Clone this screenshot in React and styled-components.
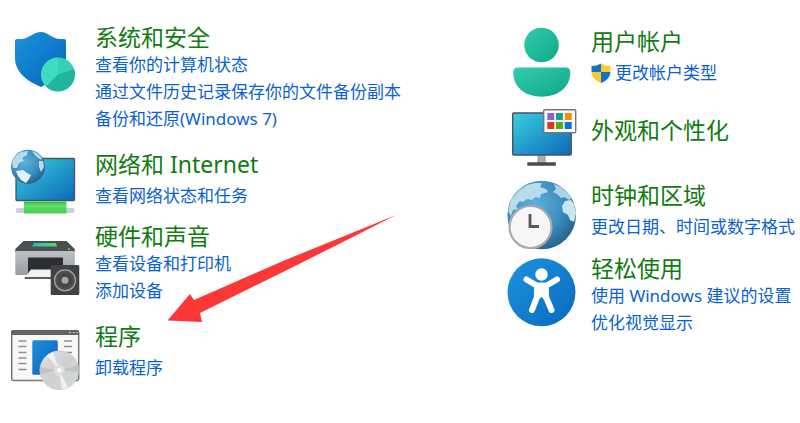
import React from 'react'
import styled, { createGlobalStyle, ThemeProvider } from 'styled-components'

const theme = {
  color: {
    background: '#ffffff',
    title: '#107c10',
    link: '#0b62cf',
    arrow: '#fb3737',
  },
  font: '"Noto Sans", "Noto Sans CJK SC", sans-serif',
}

const GlobalStyle = createGlobalStyle`
  body {
    margin: 0;
    background: ${theme.color.background};
    font-family: ${theme.font};
  }
`

const Panel = styled.main`
  position: relative;
  display: grid;
  grid-template-columns: 62% 1fr;
`

const Column = styled.div`
  padding: ${props => props.$top}px 0 24px 8px;
`

const Category = styled.section`
  display: flex;
  align-items: flex-start;
  gap: 15px;
  margin-bottom: ${props => props.$after || 0}px;
`

const Picture = styled.svg`
  flex: none;
  width: 72px;
  height: 72px;
  overflow: visible;
`

const Details = styled.div`
  padding-top: ${props => (props.$bare ? 9 : 0)}px;
  white-space: nowrap;
`

const Title = styled.h2`
  margin: 0;
  font-size: 23px;
  font-weight: 400;
  line-height: 28px;
`

const TitleLink = styled.a`
  color: ${props => props.theme.color.title};
  text-decoration: none;
`

const Tasks = styled.ul`
  list-style: none;
  margin: ${props => (props.$single ? 4 : 0)}px 0 0;
  padding: 0;
`

const Task = styled.li`
  font-size: 17px;
  line-height: 27px;
`

const TaskLink = styled.a`
  display: inline-flex;
  align-items: center;
  gap: 4px;
  color: ${props => props.theme.color.link};
  text-decoration: none;

  &:hover {
    text-decoration: underline;
  }
`

const Badge = styled.svg`
  width: 20px;
  height: 20px;
`

// lies over the left column and points at the programs category
const Pointer = styled.svg`
  position: absolute;
  left: 167px;
  top: 214px;
  width: 231px;
  height: 110px;
  pointer-events: none;
`

const ShieldIcon = () => (
  <Picture viewBox="0 -1 72 72" aria-hidden="true">
    <defs>
      <linearGradient id="shield" x1="0" y1="0" x2="1" y2="1">
        <stop offset="0" stopColor="#1b93dc" />
        <stop offset="1" stopColor="#0563bd" />
      </linearGradient>
    </defs>
    <path d="M33 8 C40 8 43 14 51 15 H56 Q58 15 58 17 V34 C58 48 46 57 33 63 C19 57 7 48 7 34 V17 Q7 15 9 15 H14 C22 14 25 8 33 8 Z" fill="url(#shield)" />
    <circle cx="50" cy="50.5" r="17" fill="#33d2b7" />
    <path d="M50 50.5 V33.5 A17 17 0 0 0 38 62.5 Z" fill="#3edcc0" />
    <path d="M50 50.5 L38 62.5 A17 17 0 0 0 66 45 Z" fill="#20b69e" />
  </Picture>
)

const NetworkIcon = () => (
  <Picture viewBox="0 -1 72 72" aria-hidden="true">
    <defs>
      <linearGradient id="screen" x1="0" y1="0" x2="1" y2="1">
        <stop offset="0" stopColor="#3ad0df" />
        <stop offset="1" stopColor="#0c68b8" />
      </linearGradient>
      <radialGradient id="globe" cx="0.4" cy="0.35" r="0.7">
        <stop offset="0" stopColor="#5fb2dc" />
        <stop offset="0.6" stopColor="#3a8dbd" />
        <stop offset="1" stopColor="#255f85" />
      </radialGradient>
      <linearGradient id="cable" x1="0" y1="0" x2="0" y2="1">
        <stop offset="0" stopColor="#35b84c" />
        <stop offset="0.35" stopColor="#5fe069" />
        <stop offset="1" stopColor="#45cc54" />
      </linearGradient>
    </defs>
    <rect x="8" y="7.5" width="58.5" height="42" rx="1" fill="url(#screen)" stroke="#46545d" strokeWidth="1.3" />
    <circle cx="20" cy="15.7" r="17" fill="url(#globe)" />
    <path d="M4 11 Q7 4 13 1 L20 0 L19 4 L14 7 L16 10 L11 12 L9 17 L5 17 Z" fill="#b9dcec" />
    <path d="M24 0 L29 2 L33 6 L34 9 L30 7 L27 4 Z M31 10 L35 10 L36 16 L33 21 L31 16 Z" fill="#b9dcec" />
    <path d="M8 20 L15 19 L19 22 L23 24 L21 28 L18 32 L13 29 L10 25 Z" fill="#e6f2f7" />
    <rect x="8" y="57" width="58.5" height="5" rx="1.5" fill="#cdd1d4" />
    <rect x="16" y="50.5" width="42.5" height="12" rx="1" fill="url(#cable)" />
  </Picture>
)

const PrinterIcon = () => (
  <Picture viewBox="0 -1 72 72" aria-hidden="true">
    <defs>
      <linearGradient id="body" x1="0" y1="0" x2="0" y2="1">
        <stop offset="0" stopColor="#bdc2c7" />
        <stop offset="1" stopColor="#979da3" />
      </linearGradient>
      <linearGradient id="light" x1="0" y1="0" x2="1" y2="0">
        <stop offset="0" stopColor="#24b9cf" />
        <stop offset="1" stopColor="#5bdc55" />
      </linearGradient>
    </defs>
    <path d="M15.5 18 H58.5 L66.7 26 V29 H7.3 V26 Z" fill="#4b4e52" />
    <path d="M26 20 H48 L49 23.5 H24 Z" fill="url(#light)" />
    <circle cx="61" cy="26" r="1" fill="#62d34f" />
    <rect x="7.3" y="28" width="59.5" height="24" rx="1.5" fill="url(#body)" />
    <rect x="20" y="34.5" width="35" height="17" rx="1" fill="#2c2e31" />
    <path d="M23 46.5 H53 V55 H16.5 Z" fill="#f0f1f2" />
    <path d="M16.5 54 H53 V56 H17 Z" fill="#5a5d61" />
    <rect x="42.7" y="42" width="28.6" height="30" rx="1.5" fill="#424242" />
    <circle cx="57" cy="57.3" r="10.5" fill="#505050" stroke="#a4a4a4" strokeWidth="1.2" />
    <circle cx="57" cy="57.3" r="7.5" fill="#464646" />
    <circle cx="57" cy="57.3" r="3.5" fill="#a6a6a6" />
  </Picture>
)

const ProgramsIcon = () => (
  <Picture viewBox="0 4 72 72" aria-hidden="true">
    <defs>
      <linearGradient id="app" x1="0" y1="0" x2="1" y2="1">
        <stop offset="0" stopColor="#1f8fdf" />
        <stop offset="1" stopColor="#0961b5" />
      </linearGradient>
      <linearGradient id="disc" x1="0" y1="0" x2="1" y2="1">
        <stop offset="0" stopColor="#e1e2e2" />
        <stop offset="0.5" stopColor="#cdcfd0" />
        <stop offset="1" stopColor="#d8dadb" />
      </linearGradient>
    </defs>
    <rect x="3.7" y="13" width="67" height="49.5" rx="2" fill="#f8f8f8" stroke="#77797b" strokeWidth="1.5" />
    <path d="M3 17 V14 Q3 12 5 12 H69 Q71 12 71 14 V17 Z" fill="#626466" />
    <path d="M61 14.5 H63 M65 14.5 H66.5 M68.5 14.5 H70" stroke="#dadada" strokeWidth="1" />
    <path d="M10.5 23 H18.5 M10.5 28.5 H18.5 M10.5 34.5 H18.5 M10.5 40 H18.5 M10.5 45.5 H18.5 M10.5 51.5 H18.5 M56 23 H64 M56 28.5 H64 M58 34.5 H64" stroke="#8e9092" strokeWidth="1.3" />
    <rect x="24.3" y="22.3" width="25.5" height="34.5" rx="1.5" fill="url(#app)" />
    <circle cx="51.3" cy="52.3" r="19.5" fill="url(#disc)" stroke="#bfc1c2" strokeWidth="0.5" />
    <path d="M51.3 52.3 L39 37.5 A19.5 19.5 0 0 1 45 34 Z M51.3 52.3 L60 69.6 A19.5 19.5 0 0 1 54 71.5 Z" fill="#f0f1f1" />
    <path d="M51.3 52.3 L70 47 A19.5 19.5 0 0 1 70.5 54 Z M51.3 52.3 L32 56 A19.5 19.5 0 0 1 32.2 49 Z" fill="#c1c4c5" />
    <circle cx="51.3" cy="52.3" r="5.5" fill="#dfe0e0" />
    <circle cx="51.3" cy="52.3" r="3" fill="#fff" stroke="#c4c4c4" strokeWidth="0.7" />
  </Picture>
)

const UserIcon = () => (
  <Picture viewBox="0 -1 72 72" aria-hidden="true">
    <defs>
      <linearGradient id="user" x1="0" y1="0" x2="1" y2="1">
        <stop offset="0" stopColor="#32cdae" />
        <stop offset="1" stopColor="#10a58a" />
      </linearGradient>
    </defs>
    <circle cx="37.5" cy="17" r="17.3" fill="url(#user)" />
    <path d="M14 39.5 H61.5 Q66.3 39.5 66.3 44.5 C66.3 60 53 68.7 37.8 68.7 C22 68.7 9.3 60 9.3 44.5 Q9.3 39.5 14 39.5 Z" fill="url(#user)" />
  </Picture>
)

const AppearanceIcon = () => (
  <Picture viewBox="0 -1 72 72" aria-hidden="true">
    <rect x="33.3" y="47" width="8.5" height="8" fill="#a6abae" />
    <rect x="23.3" y="54.3" width="28.5" height="3.5" rx="0.5" fill="#454b50" />
    <rect x="8.7" y="5" width="58.5" height="42" rx="1" fill="url(#screen)" stroke="#46545d" strokeWidth="1.4" />
    <rect x="39.7" y="1.7" width="32" height="23" rx="1" fill="#fff" stroke="#72797e" strokeWidth="1.4" />
    <rect x="43.3" y="5" width="7" height="7" fill="#9460cf" />
    <rect x="52" y="5" width="7" height="7" fill="#13a594" />
    <rect x="60.7" y="5" width="7" height="7" fill="#ff8c00" />
    <rect x="43.3" y="14" width="7" height="7" fill="#da3b12" />
    <rect x="52" y="14" width="7" height="7" fill="#54ae12" />
    <rect x="60.7" y="14" width="7" height="7" fill="#0873cf" />
  </Picture>
)

const ClockIcon = () => (
  <Picture viewBox="0 -1 72 72" aria-hidden="true">
    <circle cx="37.7" cy="33" r="34.3" fill="url(#globe)" />
    <path d="M7 18 L14 9 L23 3 L31 1 L38 1 L36 5 L42 7 L44 10 L37 12 L36 16 L31 15 L28 18 L23 17 L19 20 L16 19 L12 24 L14 27 L9 28 L7 34 L4 29 Z" fill="#b7dcec" />
    <path d="M50 2 L57 5 L63 10 L68 16 L65 18 L60 15 L57 16 L53 12 L49 10 L52 7 Z" fill="#a9d4e7" />
    <path d="M61 19 L67 18 L70 22 L72 31 L70 40 L66 38 L64 33 L59 30 L58 24 Z" fill="#c9e7f2" />
    <circle cx="26.5" cy="45" r="21" fill="#f6f6f6" stroke="#a7aaac" strokeWidth="2.2" />
    <path d="M26 32 V44.5 H35" fill="none" stroke="#55585a" strokeWidth="2.8" />
  </Picture>
)

const EaseIcon = () => (
  <Picture viewBox="0 -1 72 72" aria-hidden="true">
    <defs>
      <linearGradient id="ease" x1="0" y1="0" x2="1" y2="1">
        <stop offset="0" stopColor="#1d94dd" />
        <stop offset="1" stopColor="#0969bd" />
      </linearGradient>
    </defs>
    <circle cx="37.5" cy="37.3" r="34" fill="url(#ease)" />
    <circle cx="37.5" cy="19.5" r="6.2" fill="#fff" />
    <path d="M22.500 24.5 L32.5 30.5 H42.5 L53 24.5 M33 32 V42 L28 55 M42 32 V42 L47.5 55" fill="none" stroke="#fff" strokeWidth="6" strokeLinecap="round" strokeLinejoin="round" />
    <path d="M32 29 H43 L44 44 H40 L37.5 42 L35 44 H31 Z" fill="#fff" />
  </Picture>
)

const AdminShield = () => (
  <Badge viewBox="0 0 20 20" aria-hidden="true">
    <path d="M10 0.5 Q6 3 0.5 3 V9 H10 Z" fill="#1173c7" />
    <path d="M10 0.5 Q14 3 19.5 3 V9 H10 Z" fill="#ffc928" />
    <path d="M0.5 9 C1 15 5 18 10 20 V9 Z" fill="#ffc928" />
    <path d="M19.5 9 C19 15 15 18 10 20 V9 Z" fill="#1173c7" />
  </Badge>
)

const leftCategories = [
  {
    title: '系统和安全',
    icon: ShieldIcon,
    after: 18,
    tasks: ['查看你的计算机状态', '通过文件历史记录保存你的文件备份副本', '备份和还原(Windows 7)'],
  },
  { title: '网络和 Internet', icon: NetworkIcon, tasks: ['查看网络状态和任务'] },
  { title: '硬件和声音', icon: PrinterIcon, after: 18, tasks: ['查看设备和打印机', '添加设备'] },
  { title: '程序', icon: ProgramsIcon, tasks: ['卸载程序'] },
]

const rightCategories = [
  { title: '用户帐户', icon: UserIcon, after: 8, admin: true, tasks: ['更改帐户类型'] },
  { title: '外观和个性化', icon: AppearanceIcon, after: 2, tasks: [] },
  { title: '时钟和区域', icon: ClockIcon, after: 1, tasks: ['更改日期、时间或数字格式'] },
  { title: '轻松使用', icon: EaseIcon, tasks: ['使用 Windows 建议的设置', '优化视觉显示'] },
]

const CategoryItem = props => {
  const { title, icon: Icon, tasks, after, admin } = props
  return (
    <Category $after={after}>
      <Icon />
      <Details $bare={tasks.length === 0}>
        <Title>
          <TitleLink href="#">{title}</TitleLink>
        </Title>
        {tasks.length > 0 && (
          <Tasks $single={tasks.length === 1}>
            {tasks.map(task => (
              <Task key={task}>
                <TaskLink href="#">
                  {admin && <AdminShield />}
                  {task}
                </TaskLink>
              </Task>
            ))}
          </Tasks>
        )}
      </Details>
    </Category>
  )
}

const App = () => (
  <ThemeProvider theme={theme}>
    <GlobalStyle />
    <Panel lang="zh-CN">
      <Column $top={23}>
        {leftCategories.map(item => <CategoryItem key={item.title} {...item} />)}
      </Column>
      <Column $top={27}>
        {rightCategories.map(item => <CategoryItem key={item.title} {...item} />)}
      </Column>
      <Pointer viewBox="0 0 231 110" aria-hidden="true">
        <path d="M0.5 106.5 L23 80 L27 86 L116 47 L229 1 L170 31 L116 58 L33 99 L35 108 Z" fill={theme.color.arrow} />
      </Pointer>
    </Panel>
  </ThemeProvider>
)

export default App
